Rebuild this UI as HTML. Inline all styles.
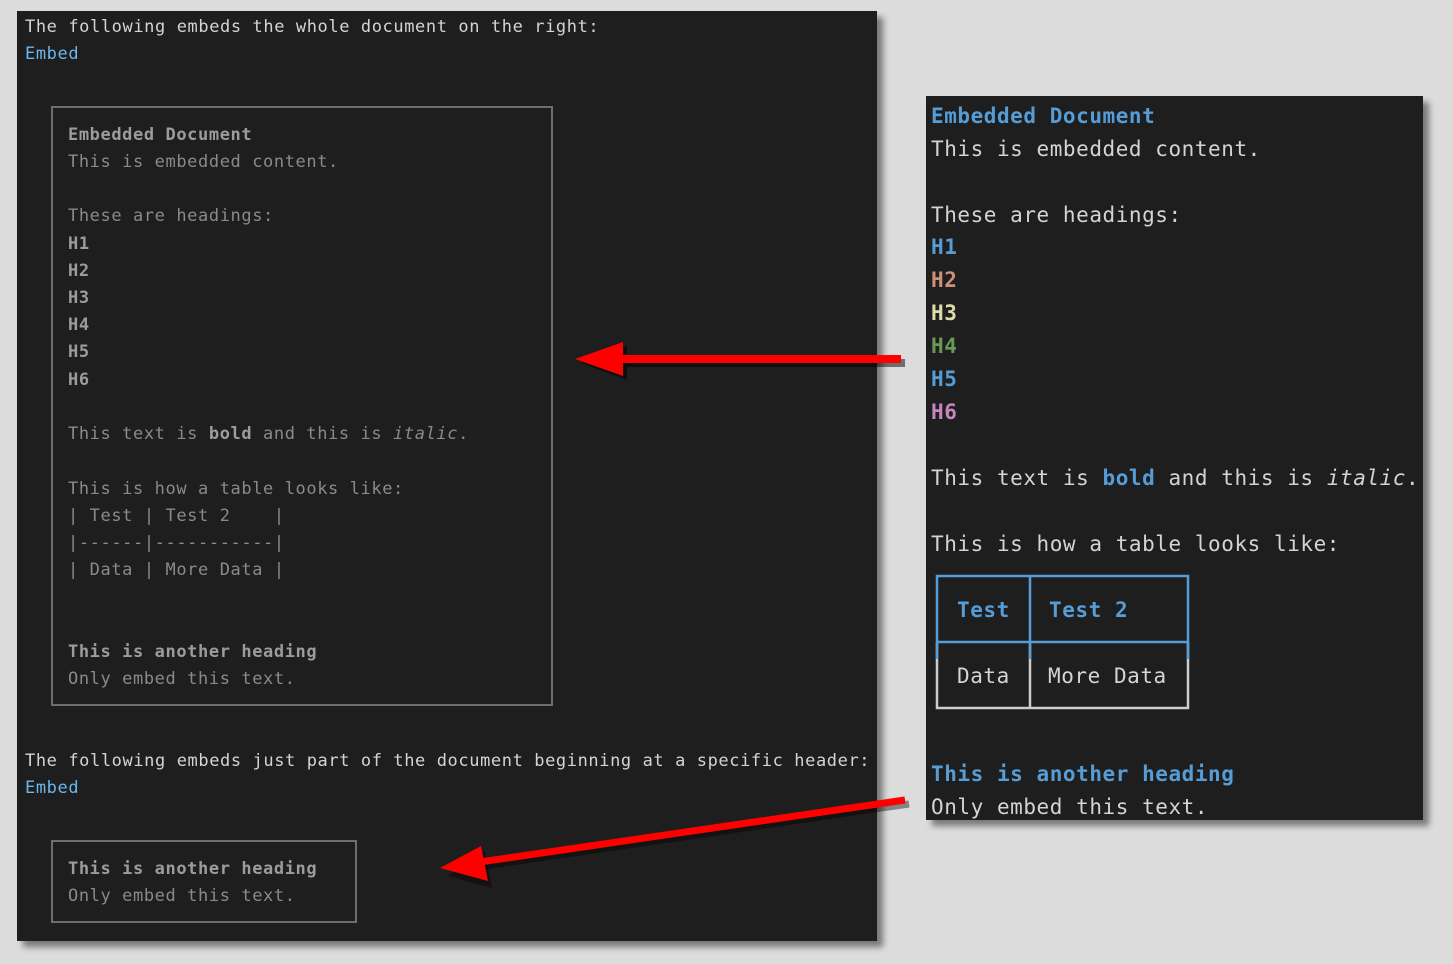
<!DOCTYPE html>
<html><head><meta charset="utf-8"><style>
body{margin:0;width:1453px;height:964px;background:#dcdcdc;position:relative;overflow:hidden;font-family:"DejaVu Sans Mono","Liberation Mono",monospace;}
.p{position:absolute;background:#1e1e1e;}
.l{position:absolute;white-space:pre;font-size:17px;letter-spacing:0.6px;line-height:20px;color:#d4d4d4;}
.g{color:#8a8a8a}
.gb{color:#9c9c9c;font-weight:bold}
.lk{color:#6cb6ee}
.r{position:absolute;white-space:pre;font-size:21px;letter-spacing:0.55px;line-height:26px;color:#d4d4d4;}
.b{color:#569cd6;font-weight:bold}
</style></head><body>
<div class="p" style="left:17px;top:11px;width:860px;height:930px;box-shadow:6px 6px 6px rgba(0,0,0,0.45)"></div>
<div class="p" style="left:926px;top:96px;width:497px;height:724px;box-shadow:6px 6px 6px rgba(0,0,0,0.45)"></div>

<div class="l" style="left:25px;top:17px">The following embeds the whole document on the right:</div>
<div class="l lk" style="left:25px;top:44px">Embed</div>
<div style="position:absolute;left:51px;top:106px;width:498px;height:596px;border:2px solid #6e6e6e"></div>
<div class="l gb" style="left:68px;top:125px">Embedded Document</div>
<div class="l g" style="left:68px;top:152px">This is embedded content.</div>
<div class="l g" style="left:68px;top:206px">These are headings:</div>
<div class="l gb" style="left:68px;top:234px">H1</div>
<div class="l gb" style="left:68px;top:261px">H2</div>
<div class="l gb" style="left:68px;top:288px">H3</div>
<div class="l gb" style="left:68px;top:315px">H4</div>
<div class="l gb" style="left:68px;top:342px">H5</div>
<div class="l gb" style="left:68px;top:370px">H6</div>
<div class="l g" style="left:68px;top:424px">This text is <span class="gb">bold</span> and this is <i>italic</i>.</div>
<div class="l g" style="left:68px;top:479px">This is how a table looks like:</div>
<div class="l g" style="left:68px;top:506px">| Test | Test 2    |</div>
<div class="l g" style="left:68px;top:533px">|------|-----------|</div>
<div class="l g" style="left:68px;top:560px">| Data | More Data |</div>
<div class="l gb" style="left:68px;top:642px">This is another heading</div>
<div class="l g" style="left:68px;top:669px">Only embed this text.</div>

<div class="l" style="left:25px;top:751px">The following embeds just part of the document beginning at a specific header:</div>
<div class="l lk" style="left:25px;top:778px">Embed</div>
<div style="position:absolute;left:51px;top:840px;width:302px;height:79px;border:2px solid #6e6e6e"></div>
<div class="l gb" style="left:68px;top:859px">This is another heading</div>
<div class="l g" style="left:68px;top:886px">Only embed this text.</div>

<div class="r b" style="left:931px;top:103px">Embedded Document</div>
<div class="r" style="left:931px;top:136px">This is embedded content.</div>
<div class="r" style="left:931px;top:202px">These are headings:</div>
<div class="r" style="left:931px;top:234px;color:#569cd6;font-weight:bold">H1</div>
<div class="r" style="left:931px;top:267px;color:#ce9178;font-weight:bold">H2</div>
<div class="r" style="left:931px;top:300px;color:#dcdcaa;font-weight:bold">H3</div>
<div class="r" style="left:931px;top:333px;color:#6a9955;font-weight:bold">H4</div>
<div class="r" style="left:931px;top:366px;color:#569cd6;font-weight:bold">H5</div>
<div class="r" style="left:931px;top:399px;color:#c586c0;font-weight:bold">H6</div>
<div class="r" style="left:931px;top:465px">This text is <span class="b">bold</span> and this is <i>italic</i>.</div>
<div class="r" style="left:931px;top:531px">This is how a table looks like:</div>
<svg style="position:absolute;left:0;top:0" width="1453" height="964">
<g fill="none" stroke-width="2.5">
<path d="M937 642 V708 H1188 V642 M1030 642 V708" stroke="#cccccc"/>
<path d="M937 659 V576 H1188 V659 M937 642 H1188 M1030 576 V659" stroke="#569cd6"/>
</g>
<g opacity="0.5" transform="translate(4,4)" fill="#000">
<rect x="615" y="355" width="286" height="8"/><polygon points="577,359 623,342 623,376"/>
</g>
<rect x="615" y="355" width="286" height="8" fill="#ff0000"/>
<polygon points="575,359 623,342 623,376" fill="#ff0000"/>
<g>
<line x1="905" y1="800" x2="480" y2="862" stroke="rgba(0,0,0,0.4)" stroke-width="7" transform="translate(4,4)"/>
<polygon points="444,872 488,884 481,847" fill="rgba(0,0,0,0.4)" transform="translate(4,4)"/>
<line x1="905" y1="800" x2="480" y2="862" stroke="#ff0000" stroke-width="7"/>
<polygon points="440,868 488,881 481,846" fill="#ff0000"/>
</g>
</svg>
<div class="r b" style="left:957px;top:597px">Test</div>
<div class="r b" style="left:1049px;top:597px">Test 2</div>
<div class="r" style="left:957px;top:663px">Data</div>
<div class="r" style="left:1048px;top:663px">More Data</div>
<div class="r b" style="left:931px;top:761px">This is another heading</div>
<div class="r" style="left:931px;top:794px">Only embed this text.</div>
</body></html>
